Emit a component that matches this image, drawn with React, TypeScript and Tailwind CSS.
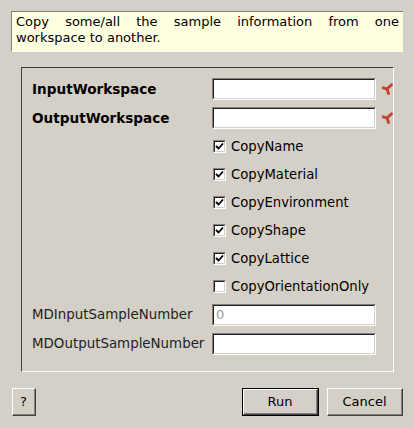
import React from 'react';

const font = { fontFamily: '"DejaVu Sans", Verdana, sans-serif' };

function Star() {
  return (
    <svg width="11" height="12" viewBox="0 0 11 12" className="ml-[6px] shrink-0">
      <g stroke="#c4402f" strokeWidth="2.8" strokeLinecap="round" fill="none">
        <path d="M5 6 L9.5 1.8" />
        <path d="M5 6 L1.2 4.8" />
        <path d="M5 6 L6.5 10.5" />
      </g>
    </svg>
  );
}

function Field({ value, star }: { value?: string; star?: boolean }) {
  return (
    <div className="flex items-center">
      <div className="w-[164px] h-[22px] border-t border-l border-t-[#808080] border-l-[#808080] border-b border-r border-b-white border-r-white">
        <div className="h-full border-t border-l border-t-[#202020] border-l-[#202020] border-b border-r border-b-[#d4d0c8] border-r-[#d4d0c8] bg-white px-[2px] flex items-center text-[13px] text-[#9a9a9a]">
          {value}
        </div>
      </div>
      {star && <Star />}
    </div>
  );
}

function Check({ label, checked }: { label: string; checked: boolean }) {
  return (
    <div className="h-[21px] flex items-center pl-[1px]">
      <div className="w-[13px] h-[13px] border-t border-l border-t-[#808080] border-l-[#808080] border-b border-r border-b-white border-r-white">
        <div className="w-full h-full bg-white border-t border-l border-t-[#202020] border-l-[#202020] border-b border-r border-b-[#d4d0c8] border-r-[#d4d0c8] flex items-center justify-center">
          {checked && (
            <svg width="9" height="9" viewBox="0 0 9 9">
              <path d="M1 4 L3.5 6.5 L8 1.5" stroke="#000" strokeWidth="1.8" fill="none" />
            </svg>
          )}
        </div>
      </div>
      <span className="ml-[5px] text-[13.2px] text-black">{label}</span>
    </div>
  );
}

function Button({ label, width, primary }: { label: string; width: string; primary?: boolean }) {
  return (
    <div className={`${width} h-[28px] ${primary ? 'border border-black' : ''}`}>
      <div className="w-full h-full border-t border-l border-t-white border-l-white border-b border-r border-b-[#404040] border-r-[#404040]">
        <div className="w-full h-full border-b border-r border-b-[#808080] border-r-[#808080] flex items-center justify-center text-[13px] text-black">
          {label}
        </div>
      </div>
    </div>
  );
}

export default function App() {
  return (
    <div className="w-[414px] h-[428px] bg-[#d4d0c8] flex flex-col" style={font}>
      {/* description */}
      <div className="mt-[11px] ml-[11px] w-[392px] h-[41px] bg-[#ffffe1] border-t border-l border-t-[#808080] border-l-[#808080] border-b border-b-white px-[4px] pt-[2px] text-[13px] leading-[16px] text-black text-justify">
        Copy some/all the sample information from one workspace to another.
      </div>

      {/* properties frame */}
      <div className="mt-[15px] ml-[21px] w-[373px] h-[305px] border-t border-l border-t-[#404040] border-l-[#404040] border-b border-r border-b-white border-r-white pt-[10px] pl-[10px]">
        <div className="grid grid-cols-[180px_auto] gap-y-[7px] items-center">
          <span className="text-[13.6px] font-bold text-black">InputWorkspace</span>
          <Field star />
          <span className="text-[13.6px] font-bold text-black">OutputWorkspace</span>
          <Field star />
          <span />
          <Check label="CopyName" checked />
          <span />
          <Check label="CopyMaterial" checked />
          <span />
          <Check label="CopyEnvironment" checked />
          <span />
          <Check label="CopyShape" checked />
          <span />
          <Check label="CopyLattice" checked />
          <span />
          <Check label="CopyOrientationOnly" checked={false} />
          <span className="text-[13.4px] text-[#222]">MDInputSampleNumber</span>
          <Field value="0" />
          <span className="text-[13.4px] text-[#222]">MDOutputSampleNumber</span>
          <Field />
        </div>
      </div>

      {/* buttons */}
      <div className="mt-[16px] pl-[12px] pr-[11px] flex items-center justify-between">
        <Button label="?" width="w-[24px]" />
        <div className="flex items-center gap-[8px]">
          <Button label="Run" width="w-[77px]" primary />
          <Button label="Cancel" width="w-[76px]" />
        </div>
      </div>
    </div>
  );
}
